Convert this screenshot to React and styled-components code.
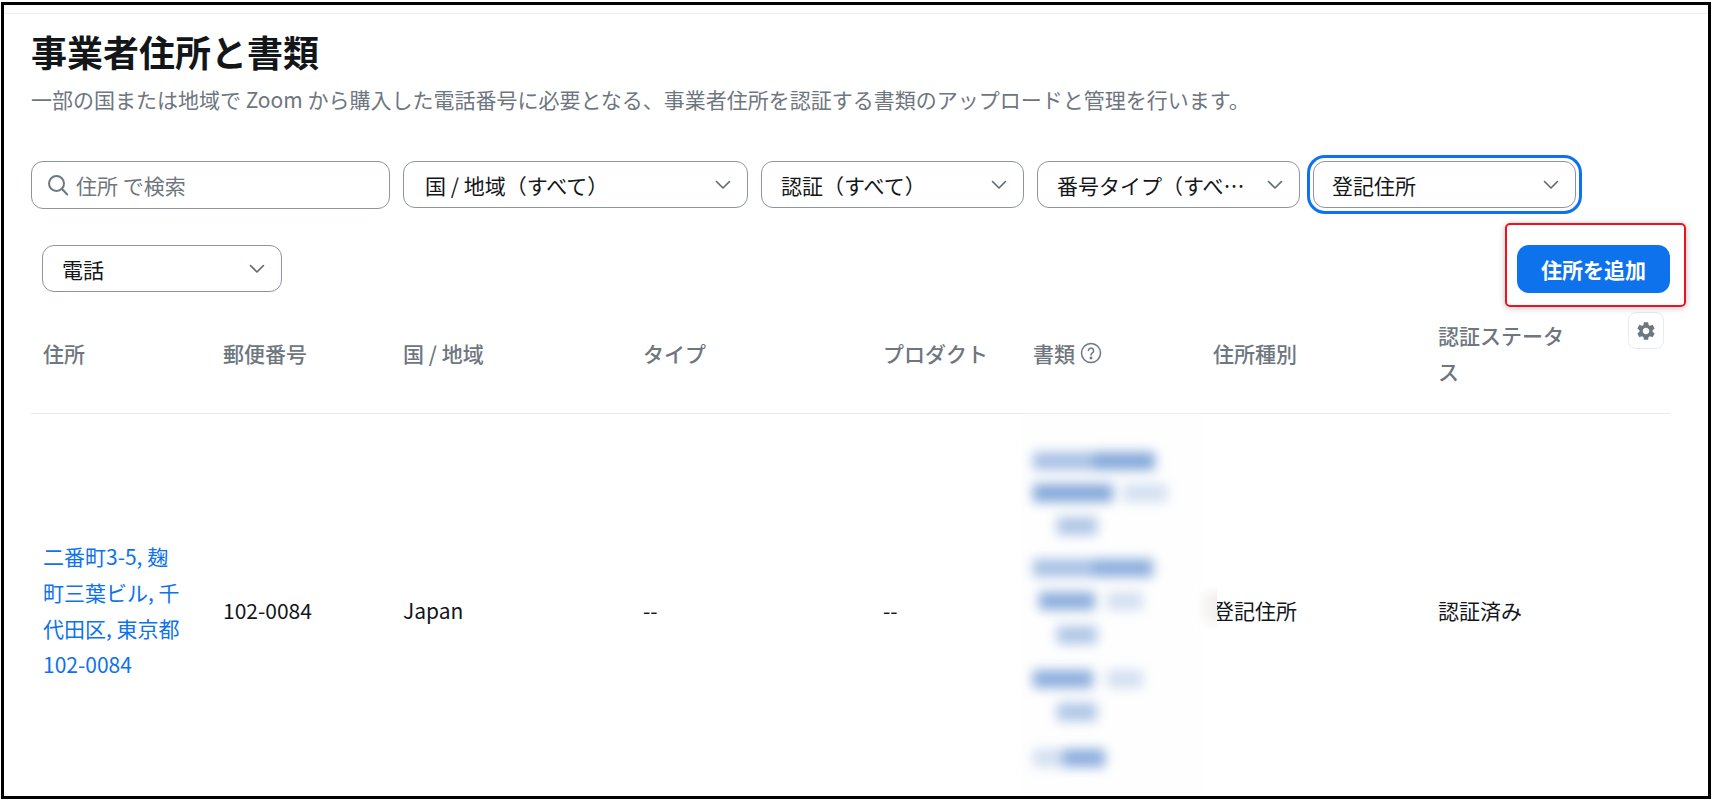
import React from "react";
import styled, { createGlobalStyle } from "styled-components";
import { MdSettings } from "react-icons/md";

const Global = createGlobalStyle`
  html, body { margin: 0; padding: 0; background: #fff; height: 100%; overflow: hidden; }
  * { box-sizing: border-box; }
  body { font-family: "Noto Sans CJK JP", "Noto Sans", sans-serif; color: #131619; }
`;
const Frame = styled.div`
  width: 1710px; height: 797px; border: 3px solid #000;
  margin: 2px 1px; background: #fff; overflow: hidden; position: relative;
`;
const TopStrip = styled.div`
  height: 9px; background: #fcfcfc; border-bottom: 1px solid #eeeeee;
`;
const Content = styled.div`
  padding: 15px 38px 0 27px;
`;
const Title = styled.h1`
  margin: 0; font-size: 36px; line-height: 44px; font-weight: 700; color: #131619;
`;
const Subtitle = styled.p`
  margin: 12px 0 0; font-size: 21px; line-height: 28px; color: #6e7680; white-space: nowrap;
`;
const Filters = styled.div`
  margin-top: 48px; display: flex; flex-wrap: wrap; gap: 13px;
`;
const SearchBox = styled.div`
  width: 359px; height: 48px; border: 1px solid #8d94a0; border-radius: 12px;
  display: flex; align-items: center; gap: 7px; padding-left: 15px;
  color: #6e7680; font-size: 21px;
`;
const Select = styled.div`
  width: ${p => p.$w}px; height: 47px; border: 1px solid #8d94a0; border-radius: 12px;
  display: flex; align-items: center; justify-content: space-between;
  padding: 0 14px 0 ${p => p.$pad}px; font-size: 21px; color: #131619; background: #fff;
  ${p => p.$focus && "box-shadow: 0 0 0 3px #fff, 0 0 0 6px #0e72ed;"}
`;
const Row2 = styled.div`
  margin-top: 36px; padding-left: 11px; display: flex; justify-content: space-between; align-items: flex-start;
`;
const HighlightBox = styled.div`
  position: absolute; left: 1501px; top: 218px; width: 181px; height: 84px;
  border: 2px solid #f01020; border-radius: 5px; box-shadow: 0 1px 6px rgba(0,0,0,.25);
`;
const AddButton = styled.button`
  width: 153px; height: 48px; border: 0; border-radius: 12px; background: #0e72ed; color: #fff;
  font: 700 21px "Noto Sans CJK JP", sans-serif;
`;
const TableGrid = styled.div`
  display: grid; grid-template-columns: 180px 180px 240px 240px 150px 180px 225px 244px;
`;
const HeadRow = styled(TableGrid)`
  height: 121px; align-items: center; border-bottom: 1px solid #e9ebef;
  font-size: 21px; font-weight: 500; color: #6e7680; line-height: 36px; position: relative;
`;
const HeadCell = styled.div`
  padding: 0 12px; display: flex; align-items: center; gap: 5px;
`;
const StatusHead = styled(HeadCell)`
  padding-right: 100px; display: block;
`;
const GearButton = styled.div`
  position: absolute; right: 6px; top: 19px; width: 36px; height: 37px; border: 1px solid #e8ebef; border-radius: 8px;
  display: flex; align-items: center; justify-content: center; background: #fff;
`;
const BodyRow = styled(TableGrid)`
  height: 391px; align-items: center; font-size: 21px; line-height: 36px; color: #131619;
`;
const Cell = styled.div` padding: 0 12px; `;
const AddressLink = styled.a`
  display: block; padding: 0 12px; color: #0e72ed; text-decoration: none;
`;
const DocsCell = styled.div`
  align-self: start; padding: 38px 12px 0; position: relative; background: #fefefe; height: 391px;
`;
const Redacted = styled.div`
  filter: blur(6px); display: flex; flex-direction: column;
`;
const DocLine = styled.div`
  display: flex; height: 18px; margin-bottom: ${p => p.$gap}px; padding-left: ${p => p.$left || 0}px;
`;
const Smear = styled.span`
  display: block; width: ${p => p.$w}px; height: 100%; margin-right: ${p => p.$mr || 0}px; background: #6f9ad4; opacity: ${p => p.$o};
`;
const RedactEdge = styled.div`
  position: absolute; left: 174px; top: 171px; width: 22px; height: 46px; z-index: 1; background: #fff;
  &::after {
    content: ""; position: absolute; inset: 0;
    background: linear-gradient(to right, #ffffff, #f1eeec);
    -webkit-mask-image: linear-gradient(to bottom, transparent, #000 30%, #000 65%, transparent);
    mask-image: linear-gradient(to bottom, transparent, #000 30%, #000 65%, transparent);
  }
`;

const Chevron = () => (
  <svg width="20" height="20" viewBox="0 0 20 20" fill="none" stroke="#5f6873" strokeWidth="1.6" strokeLinecap="round" strokeLinejoin="round">
    <path d="M3.5 6.5l6.5 6.5 6.5-6.5" />
  </svg>
);
const Sel = ({ w, pad = 21, focus, children }) => (
  <Select $w={w} $pad={pad} $focus={focus}><span>{children}</span><Chevron /></Select>
);

export default function App() {
  return (
    <Frame>
      <Global />
      <TopStrip />
      <Content>
        <Title>事業者住所と書類</Title>
        <Subtitle>一部の国または地域で Zoom から購入した電話番号に必要となる、事業者住所を認証する書類のアップロードと管理を行います。</Subtitle>
        <Filters>
          <SearchBox>
            <svg width="22" height="22" viewBox="0 0 22 22" fill="none" stroke="#6e7680" strokeWidth="2" strokeLinecap="round">
              <circle cx="9.5" cy="9.5" r="7.5" /><path d="M15 15l5.2 5.5" />
            </svg>
            <span>住所 で検索</span>
          </SearchBox>
          <Sel w={345} pad={21}>国 / 地域（すべて）</Sel>
          <Sel w={263} pad={19}>認証（すべて）</Sel>
          <Sel w={263} pad={19}>番号タイプ（すべ…</Sel>
          <Sel w={263} pad={18} focus>登記住所</Sel>
        </Filters>
        <Row2>
          <Sel w={240} pad={19}>電話</Sel>
          <AddButton>住所を追加</AddButton>
        </Row2>
        <HeadRow>
          <HeadCell>住所</HeadCell>
          <HeadCell>郵便番号</HeadCell>
          <HeadCell>国 / 地域</HeadCell>
          <HeadCell>タイプ</HeadCell>
          <HeadCell>プロダクト</HeadCell>
          <HeadCell>書類
            <svg width="22" height="22" viewBox="0 0 22 22" fill="none" stroke="#6e7680" strokeWidth="1.5">
              <circle cx="11" cy="11" r="9.5" />
              <path d="M8.4 8.6a2.6 2.6 0 1 1 3.9 2.3c-.9.5-1.3 1.1-1.3 2.2" strokeLinecap="round" />
              <circle cx="11" cy="16" r=".7" fill="#6e7680" />
            </svg>
          </HeadCell>
          <HeadCell>住所種別</HeadCell>
          <StatusHead>認証ステータス</StatusHead>
          <GearButton>
            <MdSettings size={22} color="#6e7680" />
          </GearButton>
        </HeadRow>
        <BodyRow>
          <AddressLink href="#">二番町3-5, 麹<br />町三葉ビル, 千<br />代田区, 東京都<br />102-0084</AddressLink>
          <Cell>102-0084</Cell>
          <Cell>Japan</Cell>
          <Cell>--</Cell>
          <Cell>--</Cell>
          <DocsCell>
            <Redacted>
              <DocLine $gap={14}><Smear $w={60} $o={.6} /><Smear $w={62} $o={.85} /></DocLine>
              <DocLine $gap={15}><Smear $w={80} $o={.85} $mr={10} /><Smear $w={44} $o={.3} /></DocLine>
              <DocLine $gap={24} $left={24}><Smear $w={40} $o={.55} /></DocLine>
              <DocLine $gap={15}><Smear $w={60} $o={.6} /><Smear $w={60} $o={.8} /></DocLine>
              <DocLine $gap={16} $left={6}><Smear $w={56} $o={.8} $mr={12} /><Smear $w={36} $o={.3} /></DocLine>
              <DocLine $gap={26} $left={24}><Smear $w={40} $o={.55} /></DocLine>
              <DocLine $gap={15}><Smear $w={60} $o={.8} $mr={14} /><Smear $w={36} $o={.3} /></DocLine>
              <DocLine $gap={28} $left={24}><Smear $w={40} $o={.55} /></DocLine>
              <DocLine $gap={0}><Smear $w={30} $o={.3} /><Smear $w={42} $o={.8} /></DocLine>
            </Redacted>
            <RedactEdge />
          </DocsCell>
          <Cell>登記住所</Cell>
          <Cell>認証済み</Cell>
        </BodyRow>
      </Content>
      <HighlightBox />
    </Frame>
  );
}
